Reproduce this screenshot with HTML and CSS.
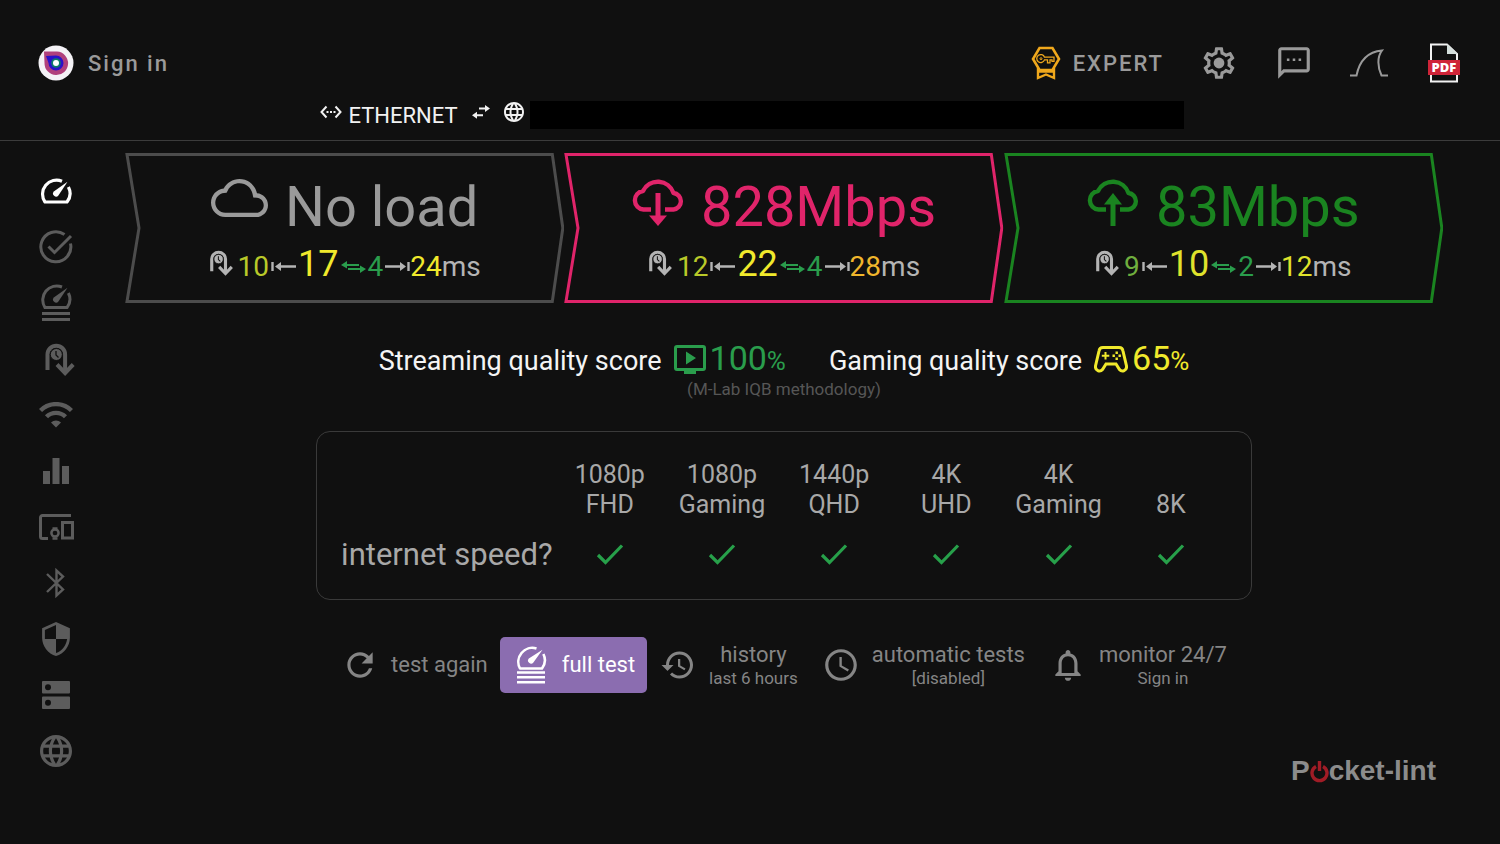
FILE: index.html
```html
<!DOCTYPE html>
<html lang="en">
<head>
    <meta charset="UTF-8">
    <meta name="viewport" content="width=device-width, initial-scale=1.0">
    <title>Speed test</title>
    <link rel="stylesheet" href="styles.css">
</head>
<body>

    <!-- shared icons -->
    <svg class="sprite" aria-hidden="true">
        <symbol id="gauge" viewBox="0 0 32 26">
            <path d="M22 3.2A14 14 0 0 0 5 24H27A14 14 0 0 0 28.4 9" fill="none" stroke="currentColor" stroke-width="3.2" stroke-linejoin="round"/>
            <path d="M27.5 3.8L18.4 17.4A3 3 0 1 1 13.8 13.4z" fill="currentColor"/>
        </symbol>
        <symbol id="gauge-full" viewBox="0 0 32 38">
            <path d="M22 3A14 14 0 0 0 5 23.6H27A14 14 0 0 0 28.4 9" fill="none" stroke="currentColor" stroke-width="3" stroke-linejoin="round"/>
            <path d="M27.5 3.8L18.4 17.4A3 3 0 1 1 13.8 13.4z" fill="currentColor"/>
            <path d="M2 29.5h28M2 35.5h28" stroke="currentColor" stroke-width="3"/>
        </symbol>
        <symbol id="ping" viewBox="0 0 32 33">
            <path d="M3.5 27V11.5a8.8 8.8 0 0 1 17.6 0V29" fill="none" stroke="currentColor" stroke-width="4"/>
            <path d="M13 21.5l8.1 8.5 8.1-8.5" fill="none" stroke="currentColor" stroke-width="4"/>
            <circle cx="12.3" cy="11.5" r="6" fill="currentColor" stroke="#101010"/>
            <path d="M12 8v4l2.5 2.5" fill="none" stroke="#101010" stroke-width="1.3"/>
        </symbol>
        <symbol id="globe" viewBox="2 2 20 20">
            <path fill="currentColor" d="M11.99 2C6.47 2 2 6.48 2 12s4.47 10 9.99 10C17.52 22 22 17.52 22 12S17.52 2 11.99 2zm6.93 6h-2.95c-.32-1.25-.78-2.45-1.38-3.56 1.84.63 3.37 1.91 4.33 3.56zM12 4.04c.83 1.2 1.48 2.53 1.91 3.96h-3.82c.43-1.43 1.08-2.76 1.91-3.96zM4.26 14C4.1 13.36 4 12.69 4 12s.1-1.36.26-2h3.38c-.08.66-.14 1.32-.14 2s.06 1.34.14 2H4.26zm.82 2h2.95c.32 1.25.78 2.45 1.38 3.56-1.84-.63-3.37-1.9-4.33-3.56zm2.95-8H5.08c.96-1.66 2.49-2.93 4.33-3.56C8.81 5.55 8.35 6.75 8.03 8zM12 19.96c-.83-1.2-1.48-2.53-1.91-3.96h3.82c-.43 1.43-1.08 2.76-1.91 3.96zM14.34 14H9.66c-.09-.66-.16-1.32-.16-2s.07-1.35.16-2h4.68c.09.65.16 1.32.16 2s-.07 1.34-.16 2zm.25 5.56c.6-1.11 1.06-2.31 1.38-3.56h2.95c-.96 1.65-2.49 2.93-4.33 3.56zM16.36 14c.08-.66.14-1.32.14-2s-.06-1.34-.14-2h3.38c.16.64.26 1.31.26 2s-.1 1.36-.26 2h-3.38z"/>
        </symbol>
        <symbol id="to-min" viewBox="0 0 25 15">
            <path d="M1.5 1v9M7 5.500h18" fill="none" stroke="currentColor" stroke-width="2.4"/>
            <path d="M4 5.500l6-4.500v9z" fill="currentColor"/>
        </symbol>
        <symbol id="to-max" viewBox="0 0 25 15">
            <path d="M23.5 1v9M0 5.500h18" fill="none" stroke="currentColor" stroke-width="2.4"/>
            <path d="M21 5.500l-6-4.500v9z" fill="currentColor"/>
        </symbol>
        <symbol id="jitter" viewBox="0 0 25 15">
            <path d="M4 4h14M21 8H7" fill="none" stroke="currentColor" stroke-width="2.2"/>
            <path d="M0 4l6-4v7.500zM25 8l-6-3.500V12z" fill="currentColor"/>
        </symbol>
        <symbol id="chevron" viewBox="0 0 439 150" preserveAspectRatio="none">
            <path d="M2 1.500H427L437.500 75L427 148.500H2L14 75z" fill="none" stroke="currentColor" stroke-width="3" vector-effect="non-scaling-stroke"/>
        </symbol>
        <symbol id="cloud-open" viewBox="0 0 52 48">
            <path d="M19 30.500H11.500a9.300 9.300 0 0 1-.5-18.500A16.500 16.500 0 0 1 41.500 14a8.300 8.300 0 0 1 0 16.500H33" fill="none" stroke="currentColor" stroke-width="4.4" stroke-linejoin="round"/>
        </symbol>
        <symbol id="check" viewBox="0 0 28 22">
            <path d="M2 11l7.500 7.500L26 1.500" fill="none" stroke="currentColor" stroke-width="3.2"/>
        </symbol>
    </svg>

    <header class="header">
        <div class="topbar">
            <button class="account">
                <svg width="36" height="36" viewBox="0 0 36 36">
                    <circle cx="18" cy="18" r="17.5" fill="#f4f2f6"/>
                    <path d="M6 6.500H19A11.800 11.800 0 1 1 6.500 18z" fill="#b0407c"/>
                    <path d="M8 11L18 10.500A7.500 7.500 0 1 1 10.500 18z" fill="#2a12c8"/>
                    <circle cx="18" cy="18" r="4.800" fill="#0e7a6a"/>
                    <circle cx="18" cy="18" r="3" fill="#fff"/>
                </svg>
                Sign in
            </button>
            <div class="tools">
                <button class="expert">
                    <svg width="30" height="34" viewBox="0 0 30 34" fill="none" stroke="#f0a81c">
                        <path d="M8.500 2h13l6.500 11-6.500 11h-13L2 13z" stroke-width="2.6"/>
                        <path d="M7 22v10l8-3.500 8 3.500V22M7 25.500h16" stroke-width="2.400"/>
                        <path d="M13.500 11.200H23v4.200h-2v-1.500h-2v3h-2.500v-3h-3A4 4 0 1 1 13.500 11.200z" stroke-width="1.300"/>
                        <circle cx="10" cy="12.700" r="1" stroke-width="1"/>
                    </svg>
                    EXPERT
                </button>
                <button class="tool" aria-label="Settings">
                    <svg width="38" height="38" viewBox="0 0 24 24">
                        <path fill="currentColor" d="M19.43 12.98c.04-.32.07-.64.07-.98s-.03-.66-.07-.98l2.11-1.65c.19-.15.24-.42.12-.64l-2-3.46c-.12-.22-.39-.3-.61-.22l-2.49 1c-.52-.4-1.08-.73-1.69-.98l-.38-2.65C14.46 2.18 14.25 2 14 2h-4c-.25 0-.46.18-.49.42l-.38 2.65c-.61.25-1.17.59-1.69.98l-2.49-1c-.23-.09-.49 0-.61.22l-2 3.46c-.13.22-.07.49.12.64l2.11 1.65c-.04.32-.07.65-.07.98s.03.66.07.98l-2.11 1.65c-.19.15-.24.42-.12.64l2 3.46c.12.22.39.3.61.22l2.49-1c.52.4 1.08.73 1.69.98l.38 2.65c.03.24.24.42.49.42h4c.25 0 .46-.18.49-.42l.38-2.65c.61-.25 1.17-.59 1.69-.98l2.49 1c.23.09.49 0 .61-.22l2-3.46c.12-.22.07-.49-.12-.64l-2.11-1.65z"/>
                        <path fill="#101010" d="M17.45 11.27c.04.31.05.52.05.73s-.02.43-.05.73l-.14 1.13.89.7 1.08.84-.7 1.21-1.27-.51-1.04-.42-.9.68c-.43.32-.84.56-1.25.73l-1.06.43-.16 1.13-.2 1.35h-1.4l-.19-1.35-.16-1.13-1.06-.43c-.43-.18-.83-.41-1.23-.71l-.91-.7-1.06.43-1.27.51-.7-1.21 1.08-.84.89-.7-.14-1.13c-.03-.31-.05-.54-.05-.74s.02-.43.05-.73l.14-1.13-.89-.7-1.08-.84.7-1.21 1.27.51 1.04.42.9-.68c.43-.32.84-.56 1.25-.73l1.06-.43.16-1.13.2-1.35h1.39l.19 1.35.16 1.13 1.06.43c.43.18.83.41 1.23.71l.91.7 1.06-.43 1.27-.51.7 1.21-1.07.85-.89.7z"/>
                        <circle cx="12" cy="12" r="3.4" fill="currentColor"/>
                    </svg>
                </button>
                <button class="tool" aria-label="Feedback">
                    <svg width="38" height="38" viewBox="0 0 24 24" fill="currentColor">
                        <path d="M20 2H4c-1.1 0-1.99.9-1.99 2L2 22l4-4h14c1.1 0 2-.9 2-2V4c0-1.1-.9-2-2-2zm0 14H5.17L4 17.17V4h16v12z"/>
                        <path d="M7.5 9.200h1.600v1.600H7.500zM11.200 9.200h1.600v1.600h-1.600zM14.900 9.200h1.600v1.600h-1.600z"/>
                    </svg>
                </button>
                <button class="tool" aria-label="Wireshark">
                    <svg width="38" height="28" viewBox="0 0 38 28" fill="none" stroke="currentColor" stroke-width="2">
                        <path d="M0 26.500H6.500C9 14 16 3 32 1.500C27 8 27.500 18 31.500 26.500H38"/>
                    </svg>
                </button>
                <button class="tool" aria-label="Export PDF">
                    <svg width="34" height="40" viewBox="0 0 34 40">
                        <path d="M4 1.500H20L30 11V38.500H4z" fill="none" stroke="#f2f2f2" stroke-width="2"/>
                        <path d="M20 1l10.500 10H20z" fill="#d3dedb"/>
                        <rect x="1" y="17" width="32" height="15" fill="#cf2438"/>
                        <text x="17" y="29" text-anchor="middle" class="pdf-text">PDF</text>
                    </svg>
                </button>
            </div>
        </div>
        <div class="connection">
            <svg width="22" height="14" viewBox="0 0 22 14" fill="none" stroke="currentColor" stroke-width="2">
                <path d="M6.500 1.500L1.500 7l5 5.500M15.500 1.500l5 5.500-5 5.500M6.500 7h2M10 7h2M13.500 7h2"/>
            </svg>
            <span>ETHERNET</span>
            <svg class="swap" width="18" height="14" viewBox="0 0 18 14">
                <path d="M7 3.500h7M11 10.200H4" stroke="currentColor" stroke-width="2"/>
                <path d="M13 0l5 3.500L13 7zM5 6.700L0 10.200l5 3.500z" fill="currentColor"/>
            </svg>
            <svg width="20" height="20"><use href="#globe"/></svg>
            <div class="address"></div>
        </div>
    </header>

    <div class="page">
        <nav class="sidebar">
            <button class="active" aria-label="Speed"><svg width="32" height="26"><use href="#gauge"/></svg></button>
            <button aria-label="Status">
                <svg width="34" height="34" viewBox="0 0 34 34" fill="none" stroke="currentColor" stroke-width="3">
                    <path d="M25.500 4.500A15 15 0 1 0 31.500 13.500"/>
                    <path d="M9.500 16.500l6 6L32 6"/>
                </svg>
            </button>
            <button aria-label="Full test"><svg width="32" height="38"><use href="#gauge-full"/></svg></button>
            <button aria-label="Ping"><svg class="ping-icon" width="32" height="33"><use href="#ping"/></svg></button>
            <button aria-label="Wi-Fi">
                <svg width="34" height="26" viewBox="0 0 34 26" fill="none" stroke="currentColor" stroke-width="4.4">
                    <path d="M1.500 8.500a22 22 0 0 1 31 0M7.500 14.800a13.500 13.500 0 0 1 19 0"/>
                    <path d="M12 20.500a7.500 7.500 0 0 1 10 0L17 25.500z" fill="currentColor" stroke="none"/>
                </svg>
            </button>
            <button aria-label="Statistics">
                <svg width="26" height="26" viewBox="0 0 26 26" fill="currentColor"><path d="M0 13h7v13H0zM9.500 0h7v26h-7zM19 8h7v18h-7z"/></svg>
            </button>
            <button aria-label="Devices">
                <svg width="35" height="26" viewBox="0 0 35 26" fill="none" stroke="currentColor" stroke-width="3">
                    <path d="M32 1.500H3.500a2 2 0 0 0-2 2V22.500a2 2 0 0 0 2 2H9"/>
                    <rect x="23.500" y="8.500" width="10" height="15.500"/>
                    <circle cx="16" cy="19" r="3.600" stroke-width="2.500"/>
                    <path d="M13.500 14.500h5M13.500 24.500h5" stroke-width="2.500"/>
                </svg>
            </button>
            <button aria-label="Bluetooth">
                <svg width="20" height="30" viewBox="0 0 20 30" fill="none" stroke="currentColor" stroke-width="2.400">
                    <path d="M1 6l16 15.500-6.500 6V2.500l6.500 6L1 24"/>
                </svg>
            </button>
            <button aria-label="Security">
                <svg width="28" height="34" viewBox="3 1 18 22">
                    <path fill="currentColor" d="M12 1L3 5v6c0 5.550 3.840 10.740 9 12 5.160-1.260 9-6.450 9-12V5l-9-4z"/>
                    <path fill="#101010" d="M12 2.900V12H4.800V6.200zM12 12h7.200c-.5 4.100-3.400 7.900-7.200 9.100z"/>
                </svg>
            </button>
            <button aria-label="Servers">
                <svg width="28" height="28" viewBox="0 0 28 28">
                    <path fill="currentColor" d="M1 0h26a1 1 0 0 1 1 1v10.500a1 1 0 0 1-1 1H1a1 1 0 0 1-1-1V1a1 1 0 0 1 1-1zM1 15.500h26a1 1 0 0 1 1 1V27a1 1 0 0 1-1 1H1a1 1 0 0 1-1-1V16.500a1 1 0 0 1 1-1z"/>
                    <circle cx="6" cy="6.300" r="3" fill="#101010"/>
                    <circle cx="6" cy="21.800" r="3" fill="#101010"/>
                </svg>
            </button>
            <button aria-label="Web"><svg width="32" height="32"><use href="#globe"/></svg></button>
        </nav>

        <main class="main">
            <section class="results">
                <article class="result idle">
                    <svg class="frame"><use href="#chevron"/></svg>
                    <div class="content">
                        <h2>
                            <svg width="57" height="38" viewBox="0 4 24 16"><path fill="currentColor" d="M19.35 10.04C18.67 6.59 15.64 4 12 4 9.11 4 6.6 5.64 5.35 8.04 2.34 8.36 0 10.91 0 14c0 3.31 2.69 6 6 6h13c2.76 0 5-2.24 5-5 0-2.64-2.05-4.78-4.65-4.96zM19 18.2H6c-2.3 0-4.2-1.9-4.2-4.2 0-2.1 1.6-3.9 3.7-4.1l1.07-.11.5-.95C8 6.9 9.9 5.8 12 5.8c2.7 0 5 1.9 5.5 4.5l.3 1.5 1.53.11c1.6.1 2.87 1.5 2.87 3.09 0 1.75-1.45 3.2-3.2 3.2z"/></svg>
                            <span>No load</span>
                        </h2>
                        <p class="latency">
                            <svg class="ping-icon" width="25" height="26"><use href="#ping"/></svg>
                            <span class="lime">10</span>
                            <svg width="25" height="15"><use href="#to-min"/></svg>
                            <span class="big yellow">17</span>
                            <svg class="green" width="25" height="15"><use href="#jitter"/></svg>
                            <span class="green">4</span>
                            <svg width="25" height="15"><use href="#to-max"/></svg>
                            <span class="yellow">24</span><span>ms</span>
                        </p>
                    </div>
                </article>
                <article class="result download">
                    <svg class="frame"><use href="#chevron"/></svg>
                    <div class="content">
                        <h2>
                            <svg width="52" height="48" viewBox="0 0 52 48">
                                <use href="#cloud-open" width="52" height="48"/>
                                <path d="M26 14v24" stroke="currentColor" stroke-width="5"/>
                                <path d="M17 36.500h18L26 47z" fill="currentColor"/>
                            </svg>
                            <span>828Mbps</span>
                        </h2>
                        <p class="latency">
                            <svg class="ping-icon" width="25" height="26"><use href="#ping"/></svg>
                            <span class="lime">12</span>
                            <svg width="25" height="15"><use href="#to-min"/></svg>
                            <span class="big yellow">22</span>
                            <svg class="green" width="25" height="15"><use href="#jitter"/></svg>
                            <span class="green">4</span>
                            <svg width="25" height="15"><use href="#to-max"/></svg>
                            <span class="orange">28</span><span>ms</span>
                        </p>
                    </div>
                </article>
                <article class="result upload">
                    <svg class="frame"><use href="#chevron"/></svg>
                    <div class="content">
                        <h2>
                            <svg width="52" height="48" viewBox="0 0 52 48">
                                <use href="#cloud-open" width="52" height="48"/>
                                <path d="M26 47V24" stroke="currentColor" stroke-width="5"/>
                                <path d="M17 25.500h18L26 14z" fill="currentColor"/>
                            </svg>
                            <span>83Mbps</span>
                        </h2>
                        <p class="latency">
                            <svg class="ping-icon" width="25" height="26"><use href="#ping"/></svg>
                            <span class="leaf">9</span>
                            <svg width="25" height="15"><use href="#to-min"/></svg>
                            <span class="big lemon">10</span>
                            <svg class="green" width="25" height="15"><use href="#jitter"/></svg>
                            <span class="green">2</span>
                            <svg width="25" height="15"><use href="#to-max"/></svg>
                            <span class="lemon">12</span><span>ms</span>
                        </p>
                    </div>
                </article>
            </section>

            <section class="scores">
                <div class="score">
                    <span>Streaming quality score</span>
                    <span class="value green">
                        <svg width="32" height="30" viewBox="0 0 32 30">
                            <rect x="1.500" y="1.500" width="29" height="23" rx="1.500" fill="none" stroke="currentColor" stroke-width="3"/>
                            <path d="M12 6.500v13l10-6.500zM10 25h12v4H10z" fill="currentColor"/>
                        </svg>
                        <span class="number">100</span><span class="percent">%</span>
                    </span>
                </div>
                <div class="score">
                    <span>Gaming quality score</span>
                    <span class="value yellow">
                        <svg width="34" height="27" viewBox="0 0 34 27">
                            <path d="M9 1.500H25a4 4 0 0 1 4 3.500L32.500 20c.6 4.500-4.500 6.500-7 3.500L22 18H12L8.500 23.500c-2.500 3-7.600 1-7-3.500L5 5A4 4 0 0 1 9 1.500z" fill="none" stroke="currentColor" stroke-width="3"/>
                            <path d="M11.500 6v7.500M7.800 9.800h7.500" stroke="currentColor" stroke-width="2"/>
                            <path d="M21.500 5.500h2.400v2.400h-2.400zM21.500 11.500h2.400v2.400h-2.400zM18.500 8.500h2.400v2.400h-2.400zM24.500 8.500h2.400v2.400h-2.400z" fill="currentColor"/>
                        </svg>
                        <span class="number">65</span><span class="percent">%</span>
                    </span>
                </div>
            </section>
            <p class="method">(M-Lab IQB methodology)</p>

            <div class="card">
                <table>
                    <thead>
                        <tr>
                            <td></td>
                            <th scope="col">1080p<br>FHD</th>
                            <th scope="col">1080p<br>Gaming</th>
                            <th scope="col">1440p<br>QHD</th>
                            <th scope="col">4K<br>UHD</th>
                            <th scope="col">4K<br>Gaming</th>
                            <th scope="col">8K</th>
                        </tr>
                    </thead>
                    <tbody>
                        <tr>
                            <th scope="row">internet speed?</th>
                            <td><svg width="28" height="22"><use href="#check"/></svg></td>
                            <td><svg width="28" height="22"><use href="#check"/></svg></td>
                            <td><svg width="28" height="22"><use href="#check"/></svg></td>
                            <td><svg width="28" height="22"><use href="#check"/></svg></td>
                            <td><svg width="28" height="22"><use href="#check"/></svg></td>
                            <td><svg width="28" height="22"><use href="#check"/></svg></td>
                        </tr>
                    </tbody>
                </table>
            </div>

            <div class="actions">
                <button>
                    <span class="icon"><svg width="38" height="38" viewBox="0 0 24 24"><path fill="currentColor" d="M17.650 6.350C16.200 4.900 14.210 4 12 4c-4.420 0-7.990 3.580-7.990 8s3.570 8 7.990 8c3.730 0 6.840-2.550 7.730-6h-2.080c-.82 2.330-3.040 4-5.650 4-3.310 0-6-2.690-6-6s2.690-6 6-6c1.660 0 3.140.69 4.220 1.780L13 11h7V4l-2.350 2.350z"/></svg></span>
                    <span>test again</span>
                </button>
                <button class="primary">
                    <span class="icon"><svg width="32" height="38" viewBox="0 0 32 38">
                        <path d="M21.500 2.500A14 14 0 0 0 5 22.500H27A14 14 0 0 0 28.400 8" fill="none" stroke="currentColor" stroke-width="2.600" stroke-linejoin="round"/>
                        <path d="M27.500 3.800L18.400 16.400A3 3 0 1 1 13.800 12.400z" fill="currentColor"/>
                        <path d="M2 26.500h28M2 31.300h28M2 36.300h28" stroke="currentColor" stroke-width="2.400"/>
                    </svg></span>
                    <span>full test</span>
                </button>
                <button>
                    <span class="icon"><svg width="36" height="36" viewBox="0 0 24 24"><path fill="currentColor" d="M13 3c-4.970 0-9 4.030-9 9H1l3.890 3.890.07.14L9 12H6c0-3.870 3.130-7 7-7s7 3.130 7 7-3.130 7-7 7c-1.930 0-3.680-.79-4.940-2.060l-1.420 1.420C8.270 19.990 10.510 21 13 21c4.970 0 9-4.030 9-9s-4.030-9-9-9zm-1 5v5l4.280 2.540.72-1.210-3.500-2.080V8H12z"/></svg></span>
                    <span>history<small>last 6 hours</small></span>
                </button>
                <button>
                    <span class="icon"><svg width="38" height="38" viewBox="0 0 24 24"><path fill="currentColor" d="M11.990 2C6.470 2 2 6.480 2 12s4.470 10 9.990 10C17.520 22 22 17.520 22 12S17.520 2 11.990 2zM12 20c-4.420 0-8-3.580-8-8s3.580-8 8-8 8 3.580 8 8-3.580 8-8 8zm.5-13H11v6l5.250 3.150.75-1.230-4.500-2.670z"/></svg></span>
                    <span>automatic tests<small>[disabled]</small></span>
                </button>
                <button>
                    <span class="icon"><svg width="38" height="38" viewBox="0 0 24 24"><path fill="currentColor" d="M12 22c1.100 0 2-.9 2-2h-4c0 1.100.9 2 2 2zm6-6v-5c0-3.070-1.630-5.640-4.500-6.320V4c0-.83-.67-1.500-1.500-1.500s-1.500.67-1.500 1.500v.68C7.640 5.360 6 7.920 6 11v5l-2 2v1h16v-1l-2-2zm-2 1H8v-6c0-2.480 1.510-4.500 4-4.500s4 2.020 4 4.500v6z"/></svg></span>
                    <span>monitor 24/7<small>Sign in</small></span>
                </button>
            </div>

            <footer class="brand">
                <span>P</span>
                <svg width="19" height="24" viewBox="0 0 19 24" fill="none" stroke="#a01c26" stroke-width="3.400">
                    <path d="M6 7.500a7.500 7.500 0 1 0 7 0M9.500 2v10"/>
                </svg>
                <span>cket-lint</span>
            </footer>
        </main>
    </div>

</body>
</html>
```
FILE: styles.css
```css
* {
    box-sizing: border-box;
}
body {
    margin: 0;
    min-height: 100vh;
    background: #101010;
    color: #9a9a9a;
    font-family: Roboto, sans-serif;
}
svg {
    display: block;
    flex: none;
}
button {
    padding: 0;
    border: none;
    background: none;
    color: inherit;
    font: inherit;
    cursor: pointer;
}
.sprite {
    display: none;
}

/* header */
.header {
    padding: 40px 34px 10px 38px;
    border-bottom: 1px solid #3c3c3c;
}
.topbar {
    display: flex;
    align-items: center;
    justify-content: space-between;
    height: 46px;
}
.account,
.expert {
    display: flex;
    align-items: center;
    gap: 14px;
    font-size: 22px;
    font-weight: 500;
    letter-spacing: 2px;
}
.expert {
    gap: 12px;
}
.tools {
    display: flex;
    align-items: center;
    gap: 31px;
}
.expert {
    margin-right: 2px;
}
.tool {
    display: flex;
    align-items: center;
    justify-content: center;
    width: 44px;
    height: 44px;
}
.pdf-text {
    fill: #fff;
    font-family: "Open Sans", sans-serif;
    font-size: 13px;
    font-weight: 800;
}
.connection {
    display: flex;
    align-items: center;
    justify-content: center;
    gap: 6px;
    height: 44px;
    padding-top: 14px;
    color: #f2f2f2;
    font-size: 22px;
}
.connection svg {
    margin-bottom: 6px;
}
.connection .swap {
    margin-left: 8px;
    margin-right: 8px;
}
.address {
    width: 46%;
    max-width: 654px;
    height: 28px;
    background: #000;
}

/* layout */
.page {
    display: flex;
}
.sidebar {
    display: flex;
    flex-direction: column;
    width: 112px;
    padding-top: 22px;
    color: #5c5c5c;
}
.sidebar button {
    display: flex;
    align-items: center;
    justify-content: center;
    height: 56px;
}
.sidebar .active {
    color: #fff;
}
.sidebar .ping-icon {
    margin-left: 8px;
}
.main {
    flex: 1;
    padding: 12px 57px 0 13px;
}

/* results */
.results {
    display: grid;
    grid-template-columns: repeat(3, 1fr);
}
.result {
    display: grid;
}
.frame,
.content {
    grid-area: 1 / 1;
}
.frame {
    width: 100%;
    height: 100%;
}
.content {
    padding: 22px 0 15px;
}
.idle .frame {
    color: #4c4c4c;
}
.download {
    color: #e0246a;
}
.upload {
    color: #1a8420;
}
.result h2 {
    display: flex;
    justify-content: center;
    gap: 17px;
    margin: 0;
    font-size: 56px;
    font-weight: 400;
    line-height: 64px;
}
.result h2 svg {
    margin-top: 4px;
}
.latency {
    display: flex;
    align-items: baseline;
    justify-content: center;
    gap: 2px;
    margin: 4px 0 0;
    color: #b4b4b4;
    font-size: 28px;
    line-height: 42px;
}
.latency .ping-icon {
    margin-right: 2px;
}
.latency .big {
    font-size: 36px;
}
.latency svg:last-of-type {
    margin-right: -2px;
}
.latency span + span {
    margin-left: -2px;
}
.yellow {
    color: #f0e92c;
}
.lemon {
    color: #dfe22c;
}
.lime {
    color: #b9c929;
}
.leaf {
    color: #6fae3e;
}
.green {
    color: #2a9d4c;
}
.orange {
    color: #f0b62c;
}

/* quality scores */
.scores {
    display: flex;
    justify-content: center;
    gap: 43px;
    margin-top: 37px;
    color: #f4f4f4;
    font-size: 27px;
    line-height: 36px;
}
.score,
.value {
    display: flex;
    align-items: baseline;
}
.score {
    gap: 12px;
}
.value svg {
    align-self: center;
    margin-right: 4px;
}
.value.green {
    color: #2a9d4c;
}
.value.yellow {
    color: #f0e92c;
}
.number {
    font-size: 34px;
}
.percent {
    font-size: 26px;
}
.method {
    margin: 0;
    color: #565656;
    font-size: 17px;
    line-height: 20px;
    text-align: center;
}

/* speed table */
.card {
    width: 71%;
    margin: 32px auto 0;
    padding: 28px 24px 9px;
    border: 1px solid #3a3a3a;
    border-radius: 14px;
}
.card table {
    width: 100%;
    border-collapse: collapse;
    table-layout: fixed;
    color: #a8a8a8;
}
.card td,
.card th {
    padding: 0;
    font-size: 25px;
    font-weight: 400;
    line-height: 30px;
    text-align: center;
    vertical-align: bottom;
}
.card tr > :first-child {
    width: 24%;
    text-align: left;
}
.card tbody th {
    font-size: 31px;
    line-height: 70px;
    white-space: nowrap;
}
.card tbody td {
    color: #27a04a;
    vertical-align: middle;
}
.card td svg {
    margin: 0 auto;
}

/* actions */
.actions {
    display: flex;
    justify-content: center;
    margin-top: 37px;
}
.actions button {
    display: flex;
    align-items: center;
    gap: 12px;
    height: 56px;
    padding: 0 12px;
    border-radius: 5px;
    color: #858585;
    font-size: 22px;
    line-height: 26px;
}
.actions .primary {
    background: #8b6db0;
    color: #fff;
}
.actions .icon {
    display: flex;
    justify-content: center;
    width: 38px;
}
.actions small {
    display: block;
    font-size: 17px;
    line-height: 20px;
}

/* brand */
.brand {
    display: flex;
    align-items: center;
    justify-content: flex-end;
    margin-top: 58px;
    padding-right: 7px;
    color: #8c8c8c;
    font-family: "Liberation Sans", sans-serif;
    font-size: 28px;
    font-weight: 700;
    line-height: 40px;
}
```
